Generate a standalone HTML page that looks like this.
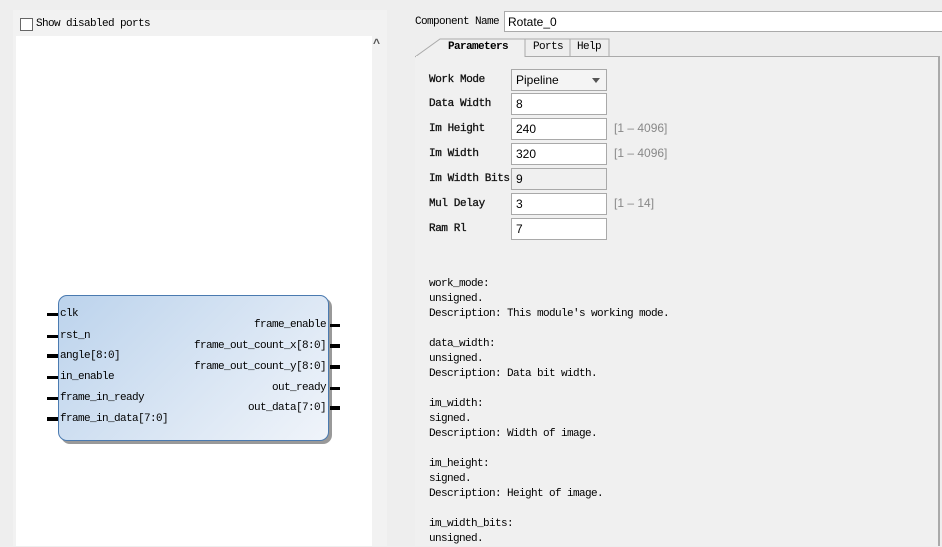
<!DOCTYPE html>
<html><head><style>
*{margin:0;padding:0;box-sizing:border-box}
body{width:942px;height:546px;background:#eeeeee;position:relative;overflow:hidden;font-family:"Liberation Mono","Noto Sans CJK SC",monospace;font-size:11px;letter-spacing:-0.6px;color:#000}
.a{position:absolute;white-space:pre}
.inp{position:absolute;left:511px;width:96px;height:22px;background:#fff;border:1px solid #a9a9a9;padding:3px 4px;font-family:"Liberation Sans",sans-serif;font-size:12px;letter-spacing:0}
.lbl{position:absolute;left:429px;letter-spacing:-0.4px;color:#111;-webkit-text-stroke:0.3px #111}
.rng{position:absolute;left:614px;color:#888;font-family:"Liberation Sans",sans-serif;font-size:12px;letter-spacing:0}
.pl{position:absolute;left:47px;width:11px;height:3px;background:#000}
.pr{position:absolute;left:330px;width:10px;height:3px;background:#000}
.b{height:4px}
</style></head><body>
<div class="a" style="left:13px;top:10px;width:374px;height:536px;background:#f2f2f2"></div>
<div class="a" style="left:20px;top:18px;width:13px;height:13px;border:1px solid #666;background:#fff"></div>
<div class="a" style="left:36px;top:18px">Show disabled ports</div>
<div class="a" style="left:16px;top:36px;width:356px;height:510px;background:#fff"></div>
<div class="a" style="left:373px;top:37px;font-size:12px;color:#555;font-weight:bold">^</div>

<div class="a" style="left:61px;top:298px;width:271px;height:146px;border-radius:9px;background:#999"></div>
<div class="a" style="left:58px;top:295px;width:271px;height:146px;border-radius:9px;border:1px solid #4a7ab0;background:linear-gradient(135deg,#bcd3ec,#f0f4fa)"></div>
<div class="pl" style="top:313px"></div><div class="pl" style="top:335px"></div><div class="pl b" style="top:354px"></div><div class="pl" style="top:376px"></div><div class="pl" style="top:397px"></div><div class="pl b" style="top:417px"></div>
<div class="a" style="left:60px;top:308px">clk</div>
<div class="a" style="left:60px;top:330px">rst_n</div>
<div class="a" style="left:60px;top:350px">angle[8:0]</div>
<div class="a" style="left:60px;top:371px">in_enable</div>
<div class="a" style="left:60px;top:392px">frame_in_ready</div>
<div class="a" style="left:60px;top:413px">frame_in_data[7:0]</div>
<div class="pr" style="top:324px"></div><div class="pr b" style="top:344px"></div><div class="pr b" style="top:365px"></div><div class="pr" style="top:387px"></div><div class="pr b" style="top:406px"></div>
<div class="a" style="right:616px;top:319px">frame_enable</div>
<div class="a" style="right:616px;top:340px">frame_out_count_x[8:0]</div>
<div class="a" style="right:616px;top:361px">frame_out_count_y[8:0]</div>
<div class="a" style="right:616px;top:382px">out_ready</div>
<div class="a" style="right:616px;top:402px">out_data[7:0]</div>

<div class="a" style="left:415px;top:16px">Component Name</div>
<div class="a" style="left:504px;top:11px;width:438px;height:21px;background:#fff;border-top:1px solid #aaa;border-bottom:1px solid #aaa;border-left:1px solid #aaa;padding:3px 3px;font-family:'Liberation Sans',sans-serif;font-size:12px;letter-spacing:0">Rotate_0</div>
<div class="a" style="left:415px;top:56px;width:525px;height:490px;background:#f0f0f0;border-top:1px solid #aaa;border-right:2px solid #aaa"></div>
<svg class="a" style="left:415px;top:37px" width="200" height="21"><path d="M0 20 L25 2 L110 2 L110 20" fill="#f0f0f0" stroke="#aaa"/><path d="M110 2 H155 V20 M155 2 H194 V20" fill="none" stroke="#aaa"/><rect x="1" y="19" width="108" height="3" fill="#f0f0f0"/></svg>
<div class="a" style="left:448px;top:41px;font-weight:bold">Parameters</div>
<div class="a" style="left:533px;top:41px">Ports</div>
<div class="a" style="left:577px;top:41px">Help</div>

<div class="lbl" style="top:74px">Work Mode</div>
<div class="inp" style="top:69px;background:#f4f4f4">Pipeline<span style="position:absolute;right:6px;top:8px;border:4px solid transparent;border-top:5px solid #555;border-bottom:0"></span></div>
<div class="lbl" style="top:98px">Data Width</div><div class="inp" style="top:93px">8</div>
<div class="lbl" style="top:123px">Im Height</div><div class="inp" style="top:118px">240</div><div class="rng" style="top:121px">[1 – 4096]</div>
<div class="lbl" style="top:148px">Im Width</div><div class="inp" style="top:143px">320</div><div class="rng" style="top:146px">[1 – 4096]</div>
<div class="lbl" style="top:173px">Im Width Bits</div><div class="inp" style="top:168px;background:#f0f0f0">9</div>
<div class="lbl" style="top:198px">Mul Delay</div><div class="inp" style="top:193px">3</div><div class="rng" style="top:196px">[1 – 14]</div>
<div class="lbl" style="top:223px">Ram Rl</div><div class="inp" style="top:218px">7</div>

<div class="a" style="left:429px;top:277px;line-height:15px">work_mode:
unsigned.
Description: This module's working mode.

data_width:
unsigned.
Description: Data bit width.

im_width:
signed.
Description: Width of image.

im_height:
signed.
Description: Height of image.

im_width_bits:
unsigned.</div>
</body></html>
